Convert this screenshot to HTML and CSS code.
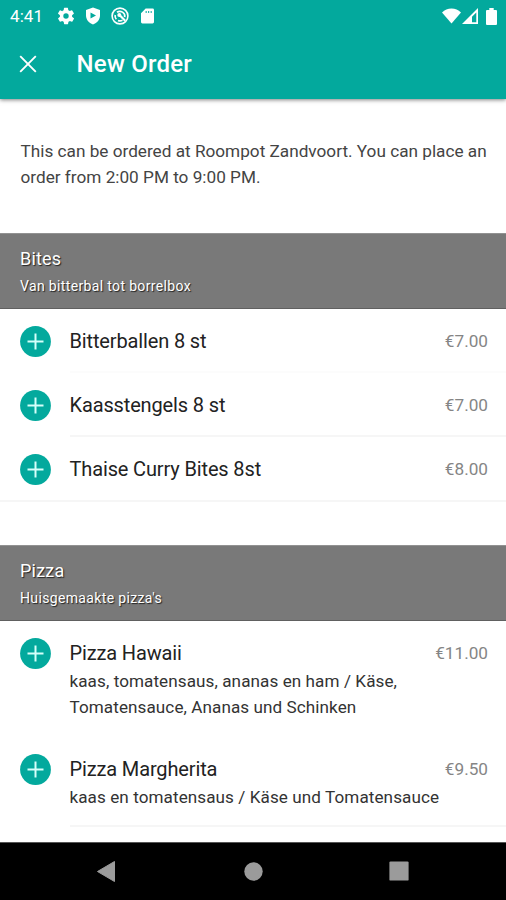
FILE: index.html
```html
<!DOCTYPE html>
<html lang="en">
<head>
<meta charset="utf-8">
<title>New Order</title>
<link rel="stylesheet" href="styles.css">
</head>
<body>
<svg class="defs" aria-hidden="true">
  <symbol id="add" viewBox="0 0 31 31"><circle cx="15.500" cy="15.500" r="15.400" fill="#03a99d"/><path d="M15.500 7.500v16M7.500 15.500h16" stroke="#d5fffa" stroke-width="2"/></symbol>
</svg>
<header class="top">
  <div class="status">
    <span class="clock">4:41</span>
    <svg class="s-gear" width="18" height="18" viewBox="1 1 22 22"><path fill="#fff" fill-rule="evenodd" d="M19.4 13a7.500 7.500 0 0 0 0-2l2.100-1.650a.5.5 0 0 0 .1-.64l-2-3.460a.5.5 0 0 0-.6-.22l-2.500 1a7.300 7.300 0 0 0-1.700-.98l-.38-2.650A.5.500 0 0 0 14 2h-4a.5.5 0 0 0-.5.420l-.38 2.650a7.300 7.300 0 0 0-1.700.98l-2.500-1a.5.5 0 0 0-.6.220l-2 3.460a.5.5 0 0 0 .1.640L4.600 11a7.500 7.500 0 0 0 0 2l-2.100 1.650a.5.5 0 0 0-.1.640l2 3.460c.1.220.4.300.6.220l2.500-1c.5.400 1.100.730 1.700.980l.38 2.650c0 .240.200.400.500.400h4c.3 0 .5-.2.500-.4l.38-2.650a7.300 7.300 0 0 0 1.700-.98l2.500 1c.2.080.5 0 .6-.22l2-3.460a.5.500 0 0 0-.1-.64zM12 15.300a3.300 3.300 0 1 1 0-6.600 3.300 3.300 0 0 1 0 6.600z"/></svg>
    <svg class="s-shield" width="16" height="18" viewBox="0 0 16 18"><path fill="#fff" fill-rule="evenodd" d="M8 .5 15 3v5.500c0 4-2.800 7.400-7 9-4.200-1.600-7-5-7-9V3zM5.500 5.600v6l5.500-3z"/></svg>
    <svg class="s-target" width="18" height="18" viewBox="0 0 18 18" fill="none" stroke="#fff"><circle cx="9" cy="9" r="7.900" stroke-width="1.600"/><path d="M5.300 12.300A4.900 4.900 0 0 1 4.200 8M6 5.300a4.900 4.900 0 0 1 7.700 4.900M7 13.500a5 5 0 0 0 4.500-.2" stroke-width="1.700"/><path d="m8.500 8 5.700 5.700" stroke-width="2.200"/><circle cx="8.300" cy="8" r="2" fill="#fff" stroke="none"/></svg>
    <svg class="s-sd" width="13" height="16" viewBox="0 0 14 16"><path fill="#fff" fill-rule="evenodd" d="M5 0h7.500Q14 0 14 1.500v13q0 1.500-1.500 1.500h-11Q0 16 0 14.500V5zM5 2.500v2.300h1.100v-2.300zm2.700 0v2.300h1.100v-2.300zm2.700 0v2.300h1.100v-2.300z"/></svg>
    <svg class="s-wifi" width="19" height="16" viewBox="0 0 19 16"><path fill="#fff" d="M9.500 15.500 0 4.500Q4 .5 9.500.5T19 4.500z"/></svg>
    <svg class="s-cell" width="16" height="16" viewBox="0 0 16 16"><path fill="#fff" fill-rule="evenodd" d="M16 0v16H0zM14.300 4.500 10 8.800v5.500h4.300z"/></svg>
    <svg class="s-battery" width="11" height="17" viewBox="0 0 11 17"><path fill="#fff" d="M3.300 0h4.400v2H10q1 0 1 1v13q0 1-1 1H1q-1 0-1-1V3q0-1 1-1h2.300z"/></svg>
  </div>
  <div class="bar">
    <svg width="18" height="18" viewBox="0 0 18 18"><path d="m1.200 1.200 15.600 15.600M16.800 1.200 1.200 16.800" stroke="#fff" stroke-width="1.900"/></svg>
    <h1>New Order</h1>
  </div>
</header>
<main>
  <p class="intro">This can be ordered at Roompot Zandvoort. You can place an<br>order from 2:00 PM to 9:00 PM.</p>
  <section>
    <div class="head"><h2>Bites</h2><p>Van bitterbal tot borrelbox</p></div>
    <div class="row"><svg class="add"><use href="#add"/></svg><div class="body faint"><h3>Bitterballen 8 st</h3><span class="price">€7.00</span></div></div>
    <div class="row"><svg class="add"><use href="#add"/></svg><div class="body"><h3>Kaasstengels 8 st</h3><span class="price">€7.00</span></div></div>
    <div class="row last"><svg class="add"><use href="#add"/></svg><div class="body"><h3>Thaise Curry Bites 8st</h3><span class="price">€8.00</span></div></div>
  </section>
  <section class="second">
    <div class="head"><h2>Pizza</h2><p>Huisgemaakte pizza's</p></div>
    <div class="row tall"><svg class="add"><use href="#add"/></svg><div class="body clear"><h3>Pizza Hawaii</h3><span class="price">€11.00</span><p>kaas, tomatensaus, ananas en ham / Käse,<br>Tomatensauce, Ananas und Schinken</p></div></div>
    <div class="row mid"><svg class="add"><use href="#add"/></svg><div class="body"><h3>Pizza Margherita</h3><span class="price">€9.50</span><p>kaas en tomatensaus / Käse und Tomatensauce</p></div></div>
  </section>
</main>
<nav>
  <svg width="18" height="21" viewBox="0 0 18 21"><path d="M17.500.5v20L.5 10.500z" fill="#9b9b9b" stroke="#9b9b9b" stroke-linejoin="round"/></svg>
  <svg class="home" width="19" height="19" viewBox="0 0 19 19"><circle cx="9.500" cy="9.500" r="9.200" fill="#9b9b9b"/></svg>
  <svg width="20" height="20" viewBox="0 0 20 20"><rect x=".4" y=".4" width="19.200" height="19.200" rx="1.200" fill="#9b9b9b"/></svg>
</nav>
</body>
</html>
```

FILE: styles.css
```css
* { box-sizing: border-box; margin: 0; padding: 0; }
body { width: 506px; height: 900px; overflow: hidden; display: flex; flex-direction: column; background: #fff; color: #222; font-family: Roboto, sans-serif; }
svg { display: block; flex: none; }
.defs { width: 0; height: 0; position: absolute; }
h1, h2, h3 { font-weight: 400; white-space: nowrap; }
.top { flex: none; height: 99px; background: #03a99d; color: #fff; box-shadow: 0 1px 4px rgba(0,0,0,.5); }
.status { height: 32px; display: flex; align-items: center; padding: 0 9px 0 10px; }
.clock { width: 47px; font-size: 17px; letter-spacing: .1px; }
.s-shield { margin-left: 10px; }
.s-target { margin-left: 10px; }
.s-sd { margin-left: 12px; }
.s-wifi { margin-left: auto; }
.s-cell { margin-left: 1px; }
.s-battery { margin-left: 8px; }
.bar { height: 64px; display: flex; align-items: center; padding-left: 19px; gap: 39.500px; }
h1 { font-size: 24px; font-weight: 500; letter-spacing: .25px; }
main { flex: 1; min-height: 0; overflow: hidden; }
.intro { height: 134px; padding: 39px 0 0 20.500px; font-size: 17.200px; line-height: 26px; white-space: nowrap; color: #444; }
.head { height: 76px; background: #797979; border-top: 1px solid #929292; border-bottom: 1px solid #606060; padding: 12px 20px; color: #fff; text-shadow: 1px 1px 1px #222; }
.head h2 { font-size: 18px; line-height: 26px; letter-spacing: .2px; }
.head p { font-size: 14px; line-height: 28px; letter-spacing: .35px; }
.row { height: 64px; display: flex; padding-left: 20px; }
.add { width: 31px; height: 31px; margin-top: 17px; }
.body { flex: 1; margin-left: 18.500px; padding: 18px 18px 0 0; border-bottom: 2px solid #f6f6f6; display: grid; grid-template-columns: 1fr auto; align-content: start; }
.faint { border-color: #fcfcfc; }
.clear { border-color: transparent; }
.last { height: 65px; border-bottom: 2px solid #f6f6f6; }
.last .body { border: 0; }
.second { padding-top: 43px; }
h3 { font-size: 20px; line-height: 28px; letter-spacing: -.14px; color: #222; }
.price { font-size: 17.200px; line-height: 29px; color: #858585; }
.body p { grid-column: 1 / 3; font-size: 17.100px; line-height: 26px; letter-spacing: .08px; color: #333; white-space: nowrap; }
.tall { height: 116px; }
.mid { height: 90px; }
nav { flex: none; height: 58px; background: #000; border-top: 1px solid #555; display: flex; justify-content: space-between; align-items: center; padding: 0 97px 1px; }
.home { margin-left: 2px; }
```
